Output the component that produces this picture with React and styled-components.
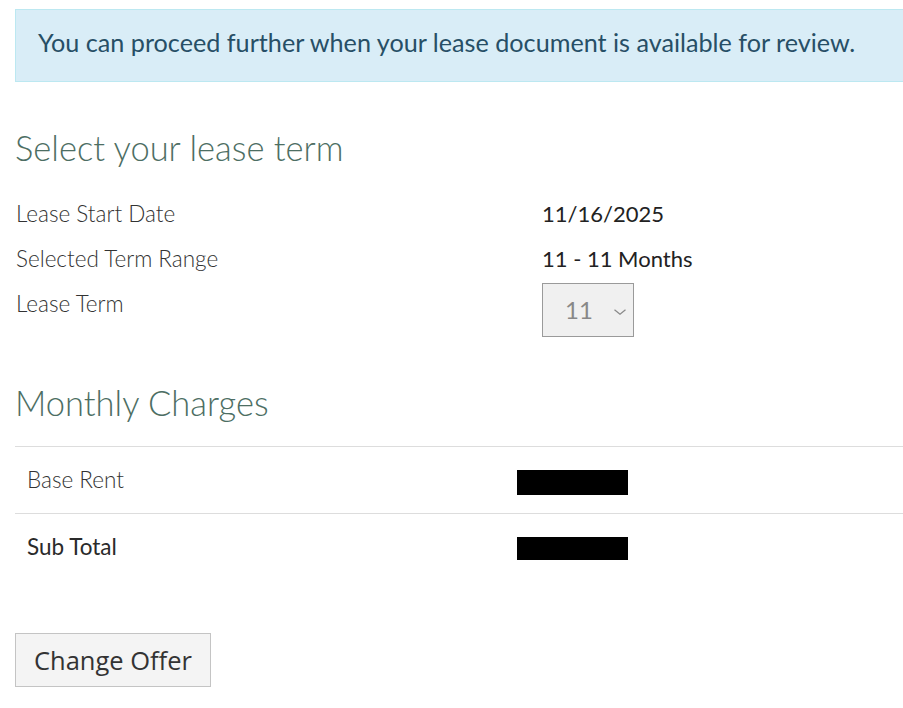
import React from "react";
import styled, { createGlobalStyle } from "styled-components";

const GlobalStyle = createGlobalStyle`
  html, body {
    margin: 0;
    padding: 0;
    background: #fff;
    overflow: hidden;
  }
  body {
    font-family: Lato, "Open Sans", sans-serif;
    color: #333;
  }
`;

const Page = styled.div`
  padding: 9px 0 0 15px;
  width: 900px;
`;

const Alert = styled.div`
  background: #d9edf7;
  border: 1px solid #bce8f1;
  border-right: none;
  color: #274f66;
  font-size: 25.2px;
  line-height: 34px;
  padding: 15px 22px 22px;
`;

const Heading = styled.h3`
  margin: ${(p) => p.$top}px 0 ${(p) => p.$bottom}px;
  font-family: Lato, sans-serif;
  font-weight: 300;
  font-size: 34.5px;
  line-height: 39.6px;
  color: #4d6e63;
`;

const Rows = styled.div`
  display: flex;
  flex-direction: column;
  gap: 15px;
`;

const Row = styled.div`
  display: grid;
  grid-template-columns: 527px 1fr;
  align-items: start;
  line-height: 30px;
`;

const Label = styled.div`
  font-size: 22.5px;
  font-weight: 300;
  color: #333;
  padding-left: 1px;
`;

const Value = styled.div`
  font-size: 22px;
  font-weight: 400;
  color: #222;
`;

const SelectWrap = styled.div`
  position: relative;
  width: 92px;
  height: 54px;
  margin-top: -6px;
`;

const Select = styled.select`
  appearance: none;
  width: 92px;
  height: 54px;
  box-sizing: border-box;
  border: 1px solid #9a9a9a;
  background: #f0f0f0;
  color: #888;
  font-family: Lato, sans-serif;
  font-size: 24px;
  padding: 0 0 0 22px;
  margin: 0;
  opacity: 1;
`;

const Chevron = styled.svg`
  position: absolute;
  left: 71px;
  top: 26px;
  pointer-events: none;
`;

const Table = styled.div`
  width: 888px;
`;

const TRow = styled.div`
  display: grid;
  grid-template-columns: 490px 1fr;
  border-top: 1px solid #dddddd;
  padding: 18px 12px;
  font-size: 22.5px;
  line-height: 30px;
`;

const Cell = styled.div`
  font-weight: ${(p) => (p.$strong ? 400 : 300)};
  color: ${(p) => (p.$strong ? "#2a2a2a" : "#333")};
  display: flex;
  align-items: center;
`;

const Redacted = styled.span`
  display: inline-block;
  width: 111px;
  height: ${(p) => p.$h}px;
  background: #000;
  margin-top: ${(p) => p.$mt}px;
`;

const Button = styled.button`
  margin-top: 53px;
  font-family: "Open Sans", sans-serif;
  font-size: 25.5px;
  line-height: 32px;
  color: #333;
  background: #f4f4f4;
  border: 1px solid #c4c4c4;
  border-radius: 0;
  padding: 10px 0;
  width: 196px;
  height: 54px;
  box-sizing: border-box;
  cursor: pointer;
`;

export default function App() {
  return (
    <>
      <GlobalStyle />
      <Page>
        <Alert>
          You can proceed further when your lease document is available for review.
        </Alert>

        <Heading $top={46} $bottom={31}>Select your lease term</Heading>

        <Rows>
          <Row>
            <Label>Lease Start Date</Label>
            <Value>11/16/2025</Value>
          </Row>
          <Row>
            <Label>Selected Term Range</Label>
            <Value>11 - 11 Months</Value>
          </Row>
          <Row>
            <Label>Lease Term</Label>
            <SelectWrap>
              <Select disabled defaultValue="11">
                <option value="11">11</option>
              </Select>
              <Chevron width="14" height="6" viewBox="0 0 14 6">
                <path d="M1.5 0.8 L7 5.2 L12.5 0.8" fill="none" stroke="#8a8a8a" strokeWidth="1.3" />
              </Chevron>
            </SelectWrap>
          </Row>
        </Rows>

        <Heading $top={46} $bottom={24}>Monthly Charges</Heading>

        <Table>
          <TRow>
            <Cell>Base Rent</Cell>
            <Cell>
              <Redacted $h={25} $mt={4} />
            </Cell>
          </TRow>
          <TRow>
            <Cell $strong>Sub Total</Cell>
            <Cell>
              <Redacted $h={23} $mt={2} />
            </Cell>
          </TRow>
        </Table>

        <Button>Change Offer</Button>
      </Page>
    </>
  );
}
